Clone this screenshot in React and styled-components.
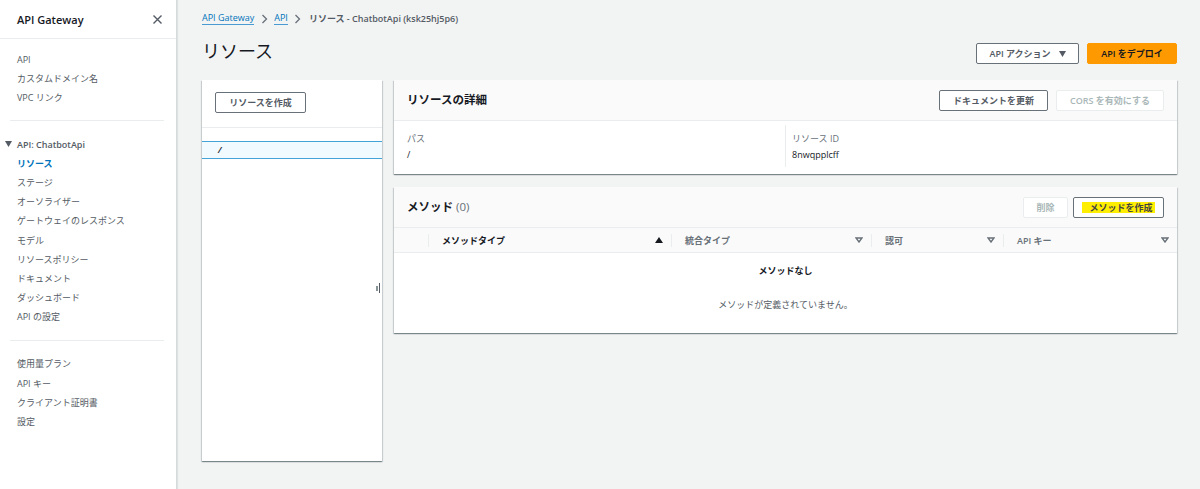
import React from 'react';
import styled, { createGlobalStyle } from 'styled-components';

const GlobalStyle = createGlobalStyle`
    html, body { margin: 0; padding: 0; height: 100%; }
    body {
        background: #f2f3f3;
        color: #16191f;
        font-family: "Open Sans", "Noto Sans CJK JP", sans-serif;
        font-size: 9px;
        overflow: hidden;
    }
`;

const Page = styled.div`
    display: flex;
    width: 1200px;
    height: 489px;
    overflow: hidden;
`;

const Sidebar = styled.aside`
    flex: 0 0 176px;
    background: #fff;
    border-right: 1px solid #d5dbdb;
    box-shadow: 1px 0 1px rgba(0, 28, 36, 0.08);
`;

const SideHeader = styled.div`
    display: flex;
    align-items: center;
    justify-content: space-between;
    height: 38px;
    padding: 0 12px 0 17px;
    border-bottom: 1px solid #eaeded;
    font-size: 11px;
    font-weight: 600;
`;

const CloseBtn = styled.svg`
    width: 13px;
    height: 13px;
    stroke: #545b64;
    stroke-width: 1.4;
    fill: none;
`;

const NavGroup = styled.div`
    padding: ${(p) => p.$top}px 0 ${(p) => p.$bottom}px;
`;

const NavItem = styled.div`
    height: 19.2px;
    line-height: 19.2px;
    padding-left: 17px;
    white-space: nowrap;
    color: ${(p) => (p.$active ? '#0073bb' : '#545b64')};
    font-weight: ${(p) => (p.$active ? 700 : 400)};
`;

const NavTitle = styled.div`
    display: flex;
    align-items: center;
    gap: 5px;
    height: 19.2px;
    padding-left: 5px;
    color: #545b64;
    font-weight: 600;
`;

const Divider = styled.hr`
    margin: 0 12px 0 10px;
    border: 0;
    border-top: 1px solid #eaeded;
`;

const Main = styled.main`
    flex: 1;
    min-width: 0;
    padding: 0 23px 0 25px;
`;

const Crumbs = styled.nav`
    display: flex;
    align-items: center;
    gap: 6.5px;
    height: 37px;
    color: #545b64;
    font-weight: 500;
`;

const CrumbLink = styled.span`
    color: #0073bb;
    line-height: 12px;
    border-bottom: 1px solid #4a9ad4;
`;

const CrumbCurrent = styled.span`
    margin-left: 1px;
    font-weight: 600;
`;

const Chevron = styled.svg`
    width: 7px;
    height: 10px;
    stroke: #687078;
    stroke-width: 1.3;
    fill: none;
`;

const TitleRow = styled.div`
    display: flex;
    align-items: flex-start;
    justify-content: space-between;
    height: 43px;
`;

const Title = styled.h1`
    margin: 0;
    font-size: 18px;
    font-weight: 400;
    line-height: 29px;
`;

const Actions = styled.div`
    display: flex;
    gap: ${(p) => p.$gap || 8}px;
    padding-top: ${(p) => p.$top || 0}px;
`;

const Button = styled.button`
    display: inline-flex;
    align-items: center;
    justify-content: center;
    gap: 8px;
    box-sizing: border-box;
    width: ${(p) => p.$w}px;
    height: 21px;
    padding: 0;
    background: #fff;
    border: 1px solid #687078;
    border-radius: 2px;
    color: #545b64;
    font: 600 9px "Open Sans", "Noto Sans CJK JP", sans-serif;
    white-space: nowrap;
`;

const PrimaryButton = styled(Button)`
    background: #ff9900;
    border-color: #ff9900;
    color: #16191f;
`;

const DisabledButton = styled(Button)`
    border-color: #eaeded;
    color: #aab7b8;
`;

const Marked = styled.mark`
    background: #ffee00;
    color: #444;
    padding: 0 2px 0 7px;
    line-height: 11px;
`;

const Caret = styled.svg`
    width: 7px;
    height: 6px;
    fill: #545b64;
`;

const Columns = styled.div`
    display: grid;
    grid-template-columns: 180px 1fr;
    gap: 12px;
`;

const Panel = styled.section`
    position: relative;
    background: #fff;
    box-shadow: 0 1px 1px rgba(0, 28, 36, 0.35), 1px 1px 1px rgba(0, 28, 36, 0.12), -1px 1px 1px rgba(0, 28, 36, 0.12);
`;

const TreePanel = styled(Panel)`
    height: 381px;
`;

const TreeHead = styled.div`
    height: 48px;
    padding: 12px 0 0 13px;
    box-sizing: border-box;
    background: #fff;
    border-bottom: 1px solid #eaeded;
`;

const TreeRow = styled.div`
    box-sizing: border-box;
    height: 18px;
    margin-top: 13px;
    padding-left: 16px;
    line-height: 16px;
    font-weight: 600;
    font-style: italic;
    background: #f1faff;
    border-top: 1px solid #44a3d8;
    border-bottom: 1px solid #44a3d8;
`;

const Handle = styled.div`
    position: absolute;
    top: 203px;
    right: 2px;
    width: 1px;
    height: 10px;
    background: #545b64;
    &::before {
        content: '';
        position: absolute;
        top: 3px;
        left: -3px;
        width: 2px;
        height: 5px;
        background: #879596;
    }
`;

const Stack = styled.div`
    display: flex;
    flex-direction: column;
    gap: 13px;
`;

const PanelHead = styled.header`
    display: flex;
    align-items: center;
    justify-content: space-between;
    box-sizing: border-box;
    height: 41px;
    padding: 0 13px;
    background: #fafafa;
    border-bottom: 1px solid #eaeded;
`;

const PanelTitle = styled.h2`
    margin: 0 0 3px;
    font-size: 11.5px;
    font-weight: 700;
`;

const Count = styled.span`
    font-weight: 400;
    color: #687078;
`;

const Details = styled.div`
    display: grid;
    grid-template-columns: 391px 1fr;
    height: 53px;
    box-sizing: border-box;
    padding-top: 4px;
`;

const Field = styled.div`
    padding: 6px 13px 0 ${(p) => p.$left}px;
    height: 42px;
    box-sizing: border-box;
    line-height: 16px;
    & + & { border-left: 1px solid #eaeded; }
`;

const FieldLabel = styled.div`
    color: #687078;
`;

const TableHead = styled.div`
    display: grid;
    grid-template-columns: 34px 243px 200px 132px 174px;
    height: 25px;
    align-items: center;
    background: #fafafa;
    border-bottom: 1px solid #eaeded;
    box-sizing: border-box;
    font-weight: 600;
    color: #687078;
`;

const HeadCell = styled.div`
    display: flex;
    align-items: center;
    justify-content: space-between;
    height: 13px;
    padding: 0 8px 0 13px;
    border-left: ${(p) => (p.$first ? 0 : '1px solid #eaeded')};
    color: ${(p) => (p.$sorted ? '#16191f' : '#687078')};
`;

const SortIcon = styled.svg`
    width: 8px;
    height: 6px;
    fill: ${(p) => (p.$filled ? '#16191f' : 'none')};
    stroke: ${(p) => (p.$filled ? 'none' : '#687078')};
    stroke-width: 1.4;
`;

const Empty = styled.div`
    height: 80px;
    text-align: center;
    color: #545b64;
    box-sizing: border-box;
    padding-top: 10px;
`;

const EmptyTitle = styled.div`
    color: #16191f;
    font-weight: 700;
    line-height: 16px;
    margin-bottom: 19px;
`;

const topNav = ['API', 'カスタムドメイン名', 'VPC リンク'];
const apiNav = ['リソース', 'ステージ', 'オーソライザー', 'ゲートウェイのレスポンス', 'モデル', 'リソースポリシー', 'ドキュメント', 'ダッシュボード', 'API の設定'];
const bottomNav = ['使用量プラン', 'API キー', 'クライアント証明書', '設定'];
const columns = ['統合タイプ', '認可', 'API キー'];

const ChevronIcon = () => (
    <Chevron viewBox="0 0 7 10"><path d="M1.5 1l4 4-4 4" /></Chevron>
);

const App = () => {
    return (
        <Page>
            <GlobalStyle />
            <Sidebar>
                <SideHeader>
                    <span>API Gateway</span>
                    <CloseBtn viewBox="0 0 13 13"><path d="M2.5 2.5l8 8M10.5 2.5l-8 8" /></CloseBtn>
                </SideHeader>
                <NavGroup $top={11} $bottom={12}>
                    {topNav.map((name) => <NavItem key={name}>{name}</NavItem>)}
                </NavGroup>
                <Divider />
                <NavGroup $top={14} $bottom={14}>
                    <NavTitle>
                        <Caret viewBox="0 0 7 6"><path d="M0 0h7L3.5 6z" /></Caret>
                        API: ChatbotApi
                    </NavTitle>
                    {apiNav.map((name, i) => <NavItem key={name} $active={i === 0}>{name}</NavItem>)}
                </NavGroup>
                <Divider />
                <NavGroup $top={13} $bottom={13}>
                    {bottomNav.map((name) => <NavItem key={name}>{name}</NavItem>)}
                </NavGroup>
            </Sidebar>
            <Main>
                <Crumbs>
                    <CrumbLink>API Gateway</CrumbLink>
                    <ChevronIcon />
                    <CrumbLink>API</CrumbLink>
                    <ChevronIcon />
                    <CrumbCurrent>リソース - ChatbotApi (ksk25hj5p6)</CrumbCurrent>
                </Crumbs>
                <TitleRow>
                    <Title>リソース</Title>
                    <Actions $top={6}>
                        <Button $w={103}>
                            API アクション
                            <Caret viewBox="0 0 7 6"><path d="M0 0h7L3.5 6z" /></Caret>
                        </Button>
                        <PrimaryButton $w={90}>API をデプロイ</PrimaryButton>
                    </Actions>
                </TitleRow>
                <Columns>
                    <TreePanel>
                        <TreeHead>
                            <Button $w={91}>リソースを作成</Button>
                        </TreeHead>
                        <TreeRow>/</TreeRow>
                        <Handle />
                    </TreePanel>
                    <Stack>
                        <Panel>
                            <PanelHead>
                                <PanelTitle>リソースの詳細</PanelTitle>
                                <Actions>
                                    <Button $w={109}>ドキュメントを更新</Button>
                                    <DisabledButton $w={108}>CORS を有効にする</DisabledButton>
                                </Actions>
                            </PanelHead>
                            <Details>
                                <Field $left={13}>
                                    <FieldLabel>パス</FieldLabel>
                                    <div>/</div>
                                </Field>
                                <Field $left={6}>
                                    <FieldLabel>リソース ID</FieldLabel>
                                    <div>8nwqpplcff</div>
                                </Field>
                            </Details>
                        </Panel>
                        <Panel>
                            <PanelHead>
                                <PanelTitle>メソッド <Count>(0)</Count></PanelTitle>
                                <Actions $gap={5}>
                                    <DisabledButton $w={45}>削除</DisabledButton>
                                    <Button $w={91}><Marked>メソッドを作成</Marked></Button>
                                </Actions>
                            </PanelHead>
                            <TableHead>
                                <HeadCell $first />
                                <HeadCell $sorted>
                                    メソッドタイプ
                                    <SortIcon $filled viewBox="0 0 8 6"><path d="M4 0l4 6H0z" /></SortIcon>
                                </HeadCell>
                                {columns.map((name) => (
                                    <HeadCell key={name}>
                                        {name}
                                        <SortIcon viewBox="0 0 8 6"><path d="M1 1h6L4 5z" /></SortIcon>
                                    </HeadCell>
                                ))}
                            </TableHead>
                            <Empty>
                                <EmptyTitle>メソッドなし</EmptyTitle>
                                <div>メソッドが定義されていません。</div>
                            </Empty>
                        </Panel>
                    </Stack>
                </Columns>
            </Main>
        </Page>
    );
};

export default App;
